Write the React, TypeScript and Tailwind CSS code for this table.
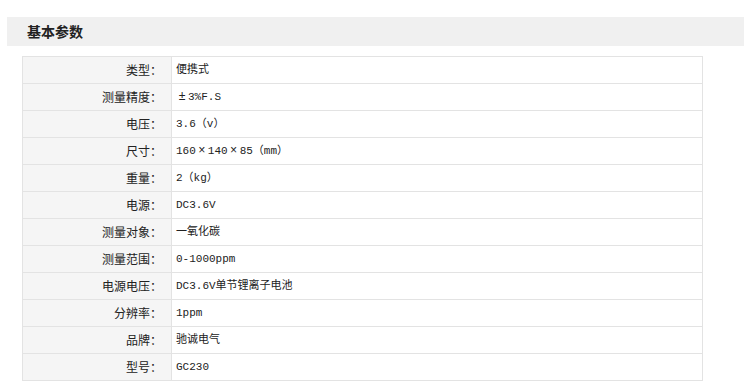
const specs: [string, string][] = [
  ["类型", "便携式"],
  ["测量精度", "±3%F.S"],
  ["电压", "3.6（v）"],
  ["尺寸", "160×140×85（mm）"],
  ["重量", "2（kg）"],
  ["电源", "DC3.6V"],
  ["测量对象", "一氧化碳"],
  ["测量范围", "0-1000ppm"],
  ["电源电压", "DC3.6V单节锂离子电池"],
  ["分辨率", "1ppm"],
  ["品牌", "驰诚电气"],
  ["型号", "GC230"],
];

// ± and × are full-width in the original page font
function Value({ text }: { text: string }) {
  return (
    <>
      {text.split(/([±×])/).map((part, i) =>
        part === "±" || part === "×" ? (
          <span key={i} className="inline-block w-[12px] text-center text-[12px]">
            {part}
          </span>
        ) : (
          <span key={i}>{part}</span>
        )
      )}
    </>
  );
}

export default function App() {
  return (
    <div className="h-[389px] w-[744px] bg-white pt-[17px] text-[#333] [font-family:'Noto_Sans_CJK_SC',sans-serif]">
      <div className="ml-[7px] flex h-[29px] items-center bg-[#f0f0f0] pb-[2px] pl-[20px]">
        <h2 className="text-[14px] font-bold leading-none text-[#222]">基本参数</h2>
      </div>
      <table className="ml-[22px] mt-[10px] w-[681px] border-collapse text-[12px]">
        <tbody>
          {specs.map(([label, value]) => (
            <tr key={label} className="h-[27px]">
              <td className="w-[149px] border border-[#e3e3e3] bg-[#f5f5f5] pr-[9px] text-right leading-none text-[#222]">
                {label}：
              </td>
              <td className="border border-[#e3e3e3] pl-[4px] text-[11px] leading-none text-[#222] [font-family:'Liberation_Mono','Noto_Sans_CJK_SC',monospace]">
                <Value text={value} />
              </td>
            </tr>
          ))}
        </tbody>
      </table>
    </div>
  );
}
